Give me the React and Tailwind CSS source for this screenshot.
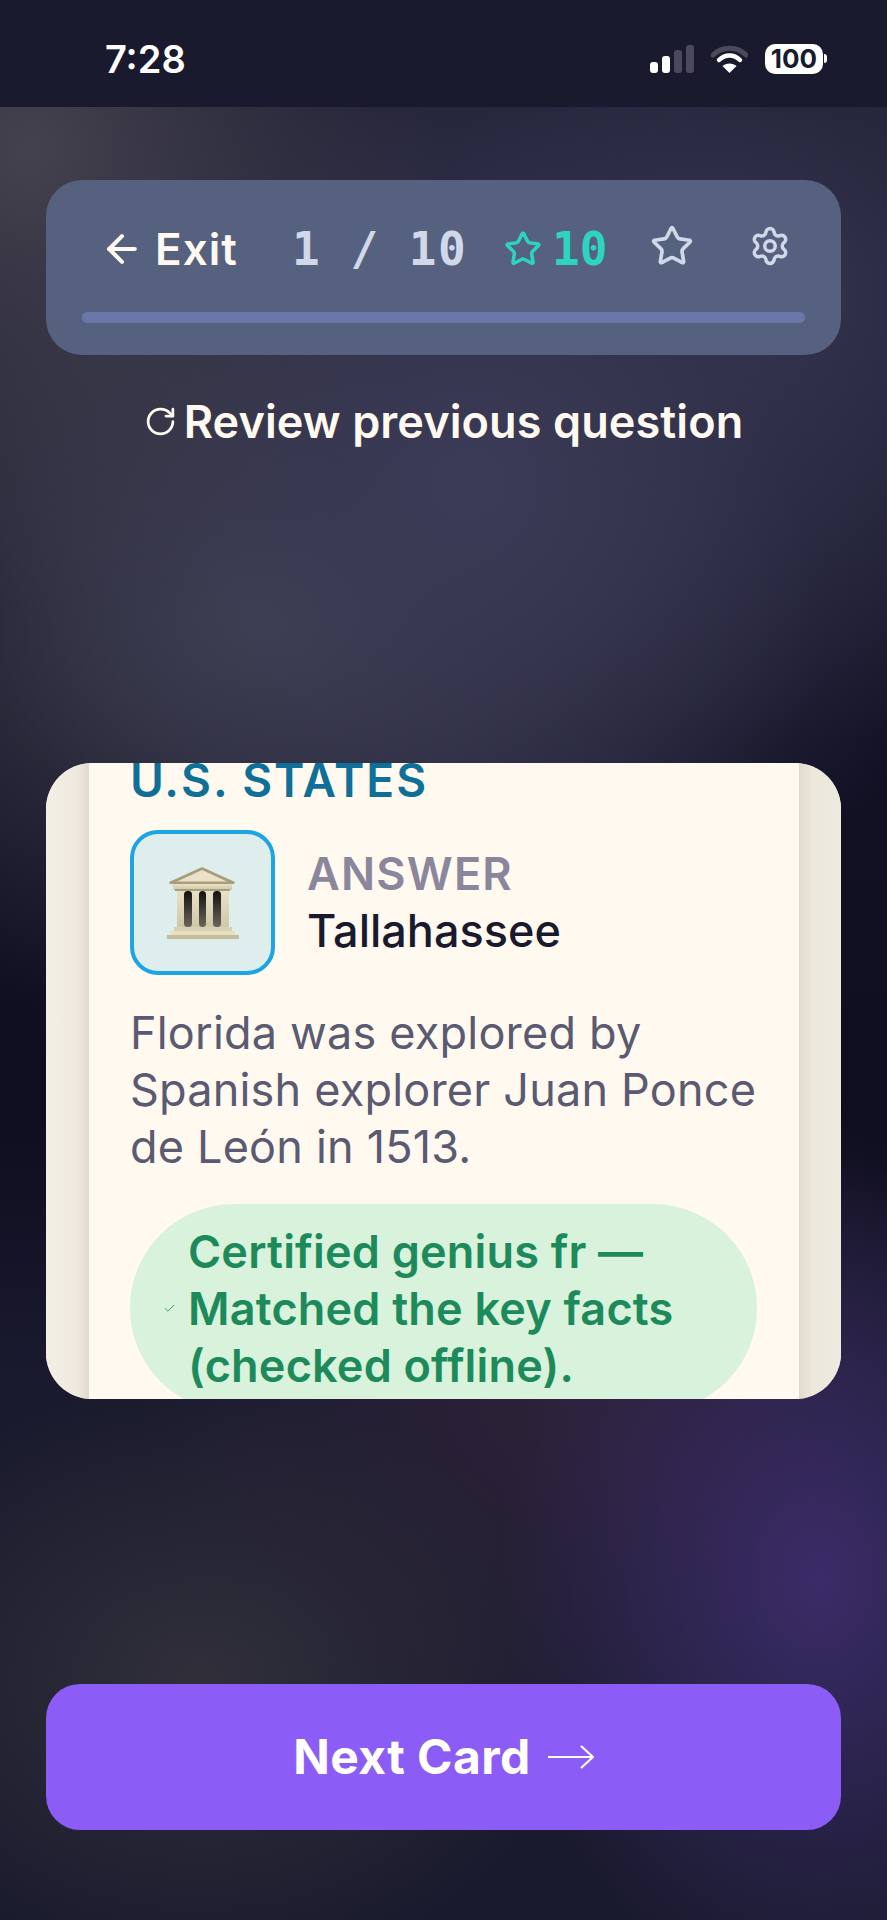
import React from 'react';
import { ArrowLeft, Star, Settings, RotateCw, Check } from 'lucide-react';

const Temple = () => (
  <svg width="72" height="74" viewBox="0 0 72 74">
    <defs>
      <linearGradient id="stone" x1="0" y1="0" x2="0" y2="1">
        <stop offset="0" stopColor="#e8e1c6" />
        <stop offset="1" stopColor="#cfc6a6" />
      </linearGradient>
      <linearGradient id="gap" x1="0" y1="0" x2="0" y2="1">
        <stop offset="0" stopColor="#141210" />
        <stop offset="1" stopColor="#6a645c" />
      </linearGradient>
    </defs>
    <path d="M35 1 L68 16 L67 18 L3 18 L2 16 Z" fill="#a89e7c" />
    <path d="M35 4 L60 15.5 L10 15.5 Z" fill="#e9e2c9" />
    <rect x="6" y="18" width="59" height="6" fill="url(#stone)" />
    <rect x="8" y="23" width="55" height="2" fill="#a89e7c" />
    <rect x="10" y="25" width="52" height="37" fill="url(#stone)" />
    <rect x="17" y="25" width="8" height="36" rx="3.5" fill="url(#gap)" />
    <rect x="32" y="25" width="7" height="36" rx="3.5" fill="url(#gap)" />
    <rect x="46" y="25" width="8" height="36" rx="3.5" fill="url(#gap)" />
    <rect x="7" y="61" width="58" height="4" fill="#d9d1b2" />
    <rect x="4" y="65" width="64" height="4" fill="#e6dfc3" />
    <rect x="0" y="69" width="72" height="4" fill="#c6bd9b" />
  </svg>
);

const StatusBar = () => (
  <div className="h-[107px] shrink-0 bg-[#1a1a2e] flex items-center pt-[10px] pl-[105px] pr-[60px] justify-between">
    <span className="font-['Inter',sans-serif] font-semibold text-[38px] leading-none text-white">7:28</span>
    <div className="flex items-center gap-[17px]">
      <svg width="44" height="28" viewBox="0 0 44 28">
        <rect x="0" y="17" width="8" height="11" rx="3" fill="#fff" />
        <rect x="12" y="11" width="8" height="17" rx="3" fill="#fff" />
        <rect x="24" y="5" width="8" height="23" rx="3" fill="#4a4a5c" />
        <rect x="36" y="0" width="8" height="28" rx="3" fill="#4a4a5c" />
      </svg>
      <svg width="37" height="28" viewBox="0 0 37 28">
        <path d="M2 10 C11 1 26 1 35 10" fill="none" stroke="#4a4a5c" strokeWidth="5" strokeLinecap="round" />
        <path d="M8 15 C14 9 23 9 29 15" fill="none" stroke="#fff" strokeWidth="4.5" strokeLinecap="round" />
        <path d="M18.5 28 L11.5 21 C15 17.5 22 17.5 25.5 21 Z" fill="#fff" />
      </svg>
      <div className="flex items-center gap-[1px]">
        <div className="w-[58px] h-[30px] rounded-[10px] bg-white flex items-center justify-center font-['Inter',sans-serif] font-bold text-[26px] leading-none text-[#1a1a2e]">100</div>
        <div className="w-[3px] h-[9px] rounded-r-full bg-white" />
      </div>
    </div>
  </div>
);

const Header = () => (
  <div className="mt-[73px] mx-[46px] h-[175px] rounded-[36px] bg-[#56617f] px-[36px] pt-[45px] flex flex-col">
    <div className="h-[48px] flex items-center pl-[18px]">
      <ArrowLeft size={44} strokeWidth={2.2} color="#fff9ef" className="shrink-0" />
      <span className="ml-[11px] w-[82px] shrink-0 font-['Inter',sans-serif] font-semibold text-[44px] leading-none tracking-[1px] text-[#fff9ef]">Exit</span>
      <span className="ml-[55px] w-[175px] shrink-0 font-['DejaVu_Sans_Mono',monospace] font-bold text-[46px] leading-none tracking-[1.5px] whitespace-nowrap text-[#d0d8ea]">1 / 10</span>
      <Star size={38} strokeWidth={2.2} color="#2dd4bf" className="ml-[37px] shrink-0" />
      <span className="ml-[10px] w-[56px] shrink-0 font-['DejaVu_Sans_Mono',monospace] font-bold text-[46px] leading-none text-[#2dd4bf]">10</span>
      <Star size={44} strokeWidth={2} color="#d0d8ea" className="ml-[42px] mt-[-6px] shrink-0" />
      <Settings size={42} strokeWidth={2} color="#d0d8ea" className="ml-[55px] mt-[-6px] shrink-0" />
    </div>
    <div className="mt-[39px] h-[11px] rounded-full bg-[#6a77a8]" />
  </div>
);

export default function App() {
  return (
    <div className="relative w-[887px] h-[1920px] overflow-hidden flex flex-col bg-[#1a1a2e] bg-[radial-gradient(ellipse_420px_460px_at_30px_150px,#44424e_0%,transparent_100%),radial-gradient(ellipse_520px_500px_at_470px_480px,#3b3b58_0%,transparent_100%),radial-gradient(ellipse_560px_420px_at_260px_620px,#40404f_0%,transparent_100%),radial-gradient(ellipse_520px_460px_at_800px_280px,#2f3048_0%,transparent_100%),radial-gradient(ellipse_320px_420px_at_820px_1580px,#3a2c68_0%,transparent_100%),radial-gradient(ellipse_380px_300px_at_200px_1680px,#302f3a_0%,transparent_100%),radial-gradient(ellipse_420px_380px_at_560px_1400px,#2c2238_0%,transparent_100%),linear-gradient(#1a1a2e,#0f0d20_58%,#1a1a2e_72%)]">
      <StatusBar />
      <Header />

      <div className="mt-[40px] h-[52px] flex items-center justify-center gap-[7px]">
        <RotateCw size={33} strokeWidth={2} color="#fff9ef" />
        <span className="font-['Inter',sans-serif] font-semibold text-[45px] leading-none tracking-[0.1px] text-[#fff9ef]">Review previous question</span>
      </div>

      <div className="mt-[316px] mx-[46px] h-[636px] rounded-[46px] overflow-hidden shrink-0 flex bg-[#efeadf]">
        <div className="w-[43px] shrink-0 bg-[linear-gradient(90deg,#f3efe6,#efeadf_70%,#dfdacd)]" />
        <div className="w-[710px] shrink-0 bg-[#fff9ef] px-[41px]">
          <div className="mt-[-7px] font-['Inter',sans-serif] font-semibold text-[46px] leading-[48px] tracking-[2px] text-[#0e7098]">U.S. STATES</div>
          <div className="mt-[26px] flex items-center">
            <div className="w-[145px] h-[145px] shrink-0 rounded-[28px] border-[4px] border-[#1ba5e5] bg-[#deeeec] flex items-center justify-center">
              <Temple />
            </div>
            <div className="ml-[32px] flex flex-col mt-[-1px]">
              <span className="font-['Inter',sans-serif] font-semibold text-[45px] leading-[57px] tracking-[1.2px] text-[#8a879c]">ANSWER</span>
              <span className="font-['Inter',sans-serif] font-medium text-[45px] leading-[57px] text-[#1a1a2e]">Tallahassee</span>
            </div>
          </div>
          <p className="mt-[29px] font-['Inter',sans-serif] text-[45px] leading-[57px] tracking-[0.2px] text-[#5a5a72]">Florida was explored by<br />Spanish explorer Juan Ponce<br />de León in 1513.</p>
          <div className="mt-[29px] w-[627px] h-[208px] rounded-[104px] bg-[#d9f2dc] flex items-center pl-[33px]">
            <Check size={13} strokeWidth={1.5} color="#1d8a5c" className="shrink-0" />
            <p className="ml-[12px] whitespace-nowrap font-['Inter',sans-serif] font-semibold text-[45px] leading-[57px] tracking-[0.2px] text-[#1d8a5c]">Certified genius fr —<br />Matched the key facts<br />(checked offline).</p>
          </div>
        </div>
        <div className="flex-1 bg-[linear-gradient(90deg,#dfdacd,#ebe7db_30%,#efeadf)]" />
      </div>

      <div className="mt-[285px] mx-[46px] h-[146px] rounded-[34px] bg-[#8b5cf6] flex items-center justify-center gap-[17px]">
        <span className="font-['Inter',sans-serif] font-bold text-[48px] leading-none tracking-[0.4px] text-white">Next Card</span>
        <svg width="46" height="26" viewBox="0 0 46 26" fill="none" stroke="#fff" strokeWidth="2.2">
          <path d="M0 13 H44" />
          <path d="M33 2 L45 13 L33 24" />
        </svg>
      </div>
    </div>
  );
}
